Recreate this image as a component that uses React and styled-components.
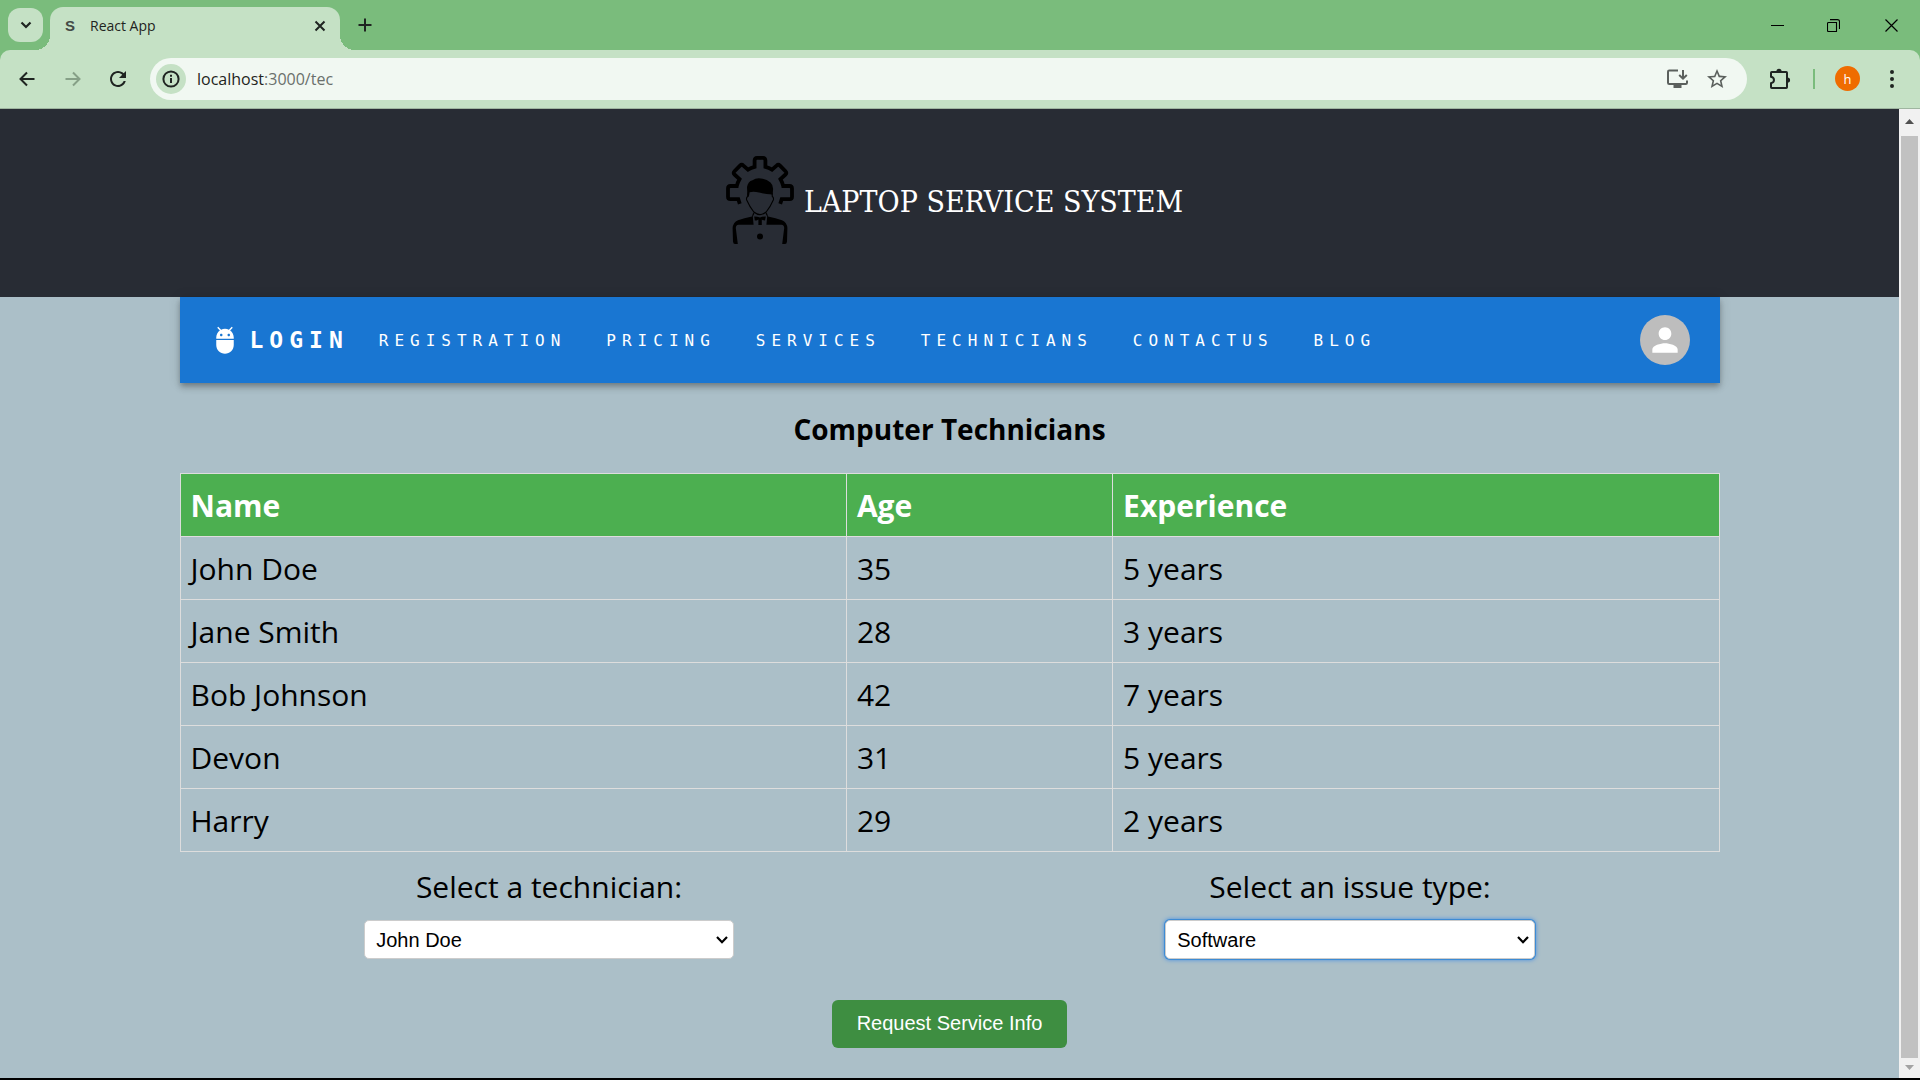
import React, { useState } from "react";
import styled, { createGlobalStyle } from "styled-components";

const ui = '"Open Sans", "Noto Sans", sans-serif';
const arial = '"Liberation Sans", Arial, sans-serif';
const mono = '"DejaVu Sans Mono", "Liberation Mono", monospace';

const GlobalStyle = createGlobalStyle`
  *, *::before, *::after { box-sizing: border-box; }
  body { margin: 0; font-family: ${ui}; color: #000; background: #abbfc8; }
  button, select, input { font: inherit; color: inherit; }
  svg { display: block; flex: none; }
`;

const Browser = styled.div`
  display: flex;
  flex-direction: column;
  min-height: 100vh;
  border-bottom: 2px solid #000;
`;

/* ---------- tab strip ---------- */

const TabStrip = styled.div`
  display: flex;
  align-items: center;
  height: 50px;
  padding-left: 8px;
  background: #7abc7c;
  color: #1f2421;
`;

const PlainButton = styled.button`
  display: flex;
  align-items: center;
  justify-content: center;
  padding: 0;
  border: 0;
  background: transparent;
  width: ${(p) => p.$w || 30}px;
  height: 34px;

  &:disabled { color: #86a087; }
`;

const TabSearch = styled(PlainButton)`
  width: 35px;
  border-radius: 12px;
  background: #c5e1c5;
`;

const Tab = styled.div`
  position: relative;
  display: flex;
  align-items: center;
  align-self: flex-end;
  width: 290px;
  height: 43px;
  margin-left: 7px;
  padding: 0 9px 6px 15px;
  border-radius: 13px 13px 0 0;
  background: #c5e1c5;
  font-size: 14px;

  &::before, &::after {
    content: "";
    position: absolute;
    bottom: 0;
    width: 15px;
    height: 15px;
  }
  &::before {
    right: 100%;
    background: radial-gradient(circle at 0 0, transparent 15px, #c5e1c5 15px);
  }
  &::after {
    left: 100%;
    background: radial-gradient(circle at 100% 0, transparent 15px, #c5e1c5 15px);
  }
`;

const Favicon = styled.span`
  width: 25px;
  font-family: ${arial};
  font-size: 15px;
  font-weight: 700;
  color: #444a46;
`;

const TabTitle = styled.span`
  flex: 1;
`;

const NewTab = styled(PlainButton)`
  margin-left: 10px;
`;

const WindowControls = styled.div`
  display: flex;
  margin-left: auto;
  color: #000;
`;

/* ---------- toolbar ---------- */

const ToolbarBack = styled.div`
  background: #7abc7c;
`;

const Toolbar = styled.div`
  display: flex;
  align-items: center;
  height: 59px;
  padding: 0 13px 1px 4px;
  border-radius: 10px 10px 0 0;
  border-bottom: 1px solid #9fb5a0;
  background: #c5e1c5;
  color: #1f2421;
`;

const AddressBar = styled.div`
  display: flex;
  align-items: center;
  flex: 1;
  height: 42px;
  margin-left: 9px;
  padding: 0 10px 0 6px;
  border-radius: 21px;
  background: #f1f8f2;
  color: #5b605d;
`;

const SiteInfo = styled(PlainButton)`
  height: 30px;
  border-radius: 50%;
  background: #c5e1c5;
  color: #1f2421;
`;

const Url = styled.div`
  flex: 1;
  margin-left: 11px;
  font-size: 16px;
  color: #6a706c;
`;

const Host = styled.span`
  color: #1f2421;
`;

const Divider = styled.span`
  width: 2px;
  height: 20px;
  margin-right: 20px;
  background: #7abc7c;
`;

const Profile = styled(PlainButton)`
  width: 25px;
  height: 25px;
  margin-right: 17px;
  border-radius: 50%;
  background: #ef6c00;
  color: #fff;
  font-size: 13px;
`;

/* ---------- web page ---------- */

const Viewport = styled.div`
  display: flex;
  flex: 1;
`;

const Page = styled.div`
  flex: 1;
`;

const Header = styled.header`
  display: flex;
  align-items: center;
  justify-content: center;
  padding: 47px 0 53px;
  background: #282c34;
  color: #fff;
`;

const Brand = styled.span`
  padding-top: 4px;
  font-family: "DejaVu Serif Condensed", "DejaVu Serif", serif;
  font-size: 30px;
  line-height: 40px;
`;

const Container = styled.div`
  max-width: 1540px;
  margin: 0 auto;
`;

const NavBar = styled.nav`
  display: flex;
  align-items: center;
  min-height: 86px;
  padding: 0 30px;
  background: #1976d2;
  color: #fff;
  font-family: ${mono};
  letter-spacing: 6px;
  box-shadow: 0 3px 5px -1px rgba(0, 0, 0, 0.2), 0 5px 6px rgba(0, 0, 0, 0.14),
    0 1px 12px rgba(0, 0, 0, 0.12);

  a { color: inherit; text-decoration: none; }
`;

const LoginLink = styled.a`
  display: flex;
  align-items: center;
  gap: 10px;
  margin-right: 30px;
  font-size: 23px;
  font-weight: 700;
`;

const NavLinks = styled.div`
  display: flex;
  flex: 1;
  gap: 40px;
  font-size: 16px;
`;

const Avatar = styled(PlainButton)`
  width: 50px;
  height: 50px;
  border-radius: 50%;
  background: #bdbdbd;
`;

const Title = styled.h2`
  margin: 26px 0 24px;
  font-size: 28px;
  line-height: 40px;
  text-align: center;
`;

const Table = styled.table`
  width: 100%;
  table-layout: fixed;
  border-collapse: collapse;
  font-size: 30px;
  line-height: 42px;
  text-align: left;

  th, td { padding: 11px 10px 9px; border: 1px solid #ddd; }
  th { background: #4caf50; color: #fff; }
`;

const Col = styled.col`
  width: ${(p) => p.$w};
`;

const Fields = styled.div`
  display: grid;
  grid-template-columns: 1fr 1fr;
  gap: 62px;
  padding: 14px 0 41px;
`;

const Field = styled.div`
  display: flex;
  flex-direction: column;
  align-items: center;
  gap: 12px;
  font-size: 30px;
  line-height: 42px;
`;

const SelectWrap = styled.div`
  position: relative;
  width: 50%;

  svg { position: absolute; right: 6px; top: 15px; pointer-events: none; }
`;

const Select = styled.select`
  display: block;
  appearance: none;
  width: 100%;
  height: 39px;
  padding: 0 32px 0 11px;
  border: 1px solid #ccc;
  border-radius: 5px;
  outline: none;
  background: #fff;
  font-family: ${arial};
  font-size: 20px;
  line-height: normal;
  box-shadow: ${(p) => (p.$active ? "0 0 0 1px #3d8bd4, 0 0 4px 1px #4a90e2" : "none")};
`;

const Submit = styled.button`
  display: block;
  height: 48px;
  margin: 0 auto 30px;
  padding: 0 25px 2px;
  border: 0;
  border-radius: 6px;
  background: #3e8e41;
  color: #fff;
  font-family: ${arial};
  font-size: 20px;
`;

const ScrollBar = styled.div`
  display: flex;
  flex-direction: column;
  align-items: center;
  width: 21px;
  background: #f1f1f1;
`;

const ScrollArrow = styled.span`
  display: flex;
  align-items: center;
  justify-content: center;
  height: ${(p) => p.$h}px;
  padding-bottom: 2px;
`;

const Thumb = styled.span`
  flex: 1;
  width: 17px;
  background: #c1c1c1;
`;

/* ---------- drawings ---------- */

const Line = ({ size, d, w = 2, box = 24 }) => (
  <svg width={size} height={size} viewBox={`0 0 ${box} ${box}`} fill="none" stroke="currentColor" strokeWidth={w} aria-hidden="true">
    <path d={d} />
  </svg>
);

const Solid = ({ size, d }) => (
  <svg width={size} height={size} viewBox="0 0 24 24" fill="currentColor" aria-hidden="true">
    <path d={d} />
  </svg>
);

const HALF_GEAR =
  "M23.8 47.8L22.3 43.2H14.5Q12 43.2 12 40.8V32.6Q12 30 14.5 30H20.8Q21.5 26.5 23.5 23.2L18.5 18.5Q16.8 17 18.5 15.2L24 9.6Q25.7 8 27.4 9.6L32 13.6Q35 11.7 38.6 10.8V4.4Q38.6 1.9 41 1.9H44.2";
const HALF_BODY =
  "M36.8 57.8L36 60.6Q28 62.5 22 64.2Q17 66.5 16.6 72L17 85.5Q17.2 88 19 88H21.8L19.8 72Q19.8 69 22.5 68.8H37.6L36.8 60.5L38.4 57.5L37.8 56.6Z";

const ServiceLogo = () => (
  <svg width="88" height="88" viewBox="0 0 88 88" aria-hidden="true">
    <g fill="none" stroke="#000" strokeWidth="3.8">
      <path d={HALF_GEAR} />
      <path d={HALF_GEAR} transform="matrix(-1 0 0 1 88 0)" />
    </g>
    <path d={HALF_BODY} />
    <path d={HALF_BODY} transform="matrix(-1 0 0 1 88 0)" />
    <path d="M31.4 40.5L31 31Q32 25.5 36.5 24.3Q40 21.6 45 22.4Q51 23 54.5 26.5Q57.2 29 57.1 33L56.6 40L56.2 38.4Q48 38 43 36.6Q38 35.2 33.6 36.2Q33.4 39 32.4 41Z" />
    <path d="M32 36.5L31.7 40.5Q30 41.5 30.7 44Q33.5 50.5 37.8 56Q41 58.6 44 58.6Q47 58.6 50.2 56Q54.5 50.5 57.3 44Q58 41.5 56.3 40.5L56 37" fill="none" stroke="#000" strokeWidth="1.1" />
    <path d="M38.2 60.5Q41 60.4 44 61.4Q47 60.4 49.8 60.5L49 64.6Q47.5 64.6 45.8 63.4V69H42.4V63.4Q40.5 64.6 38.8 64.6Z" />
    <circle cx="44" cy="80.4" r="3" />
  </svg>
);

const InstallIcon = () => (
  <svg width="22" height="22" viewBox="0 0 22 22" fill="none" stroke="currentColor" strokeWidth="2" aria-hidden="true">
    <path d="M12 2.5H3.2Q2 2.5 2 3.7V14.8Q2 16 3.2 16H19.8Q21 16 21 14.8V12.5" />
    <path d="M17 2V10M13.2 7L17 10.7L20.8 7" />
    <path d="M7.5 18.5H15.5" strokeWidth="3" />
  </svg>
);

const PuzzleIcon = () => (
  <svg width="22" height="22" viewBox="0 0 22 22" aria-hidden="true">
    <path d="M2.8 4H17.2Q18 4 18 4.8V19.2Q18 20 17.2 20H2.8Q2 20 2 19.2V15.2Q5 14.5 5 12T2 8.8V4.8Q2 4 2.8 4Z" fill="none" stroke="currentColor" strokeWidth="2" />
    <path d="M7.4 3.5A2.6 2.8 0 0 1 12.6 3.5ZM18.5 9.4A2.6 2.6 0 0 1 18.5 14.6Z" fill="currentColor" />
  </svg>
);

const InfoIcon = () => (
  <svg width="18" height="18" viewBox="0 0 18 18" fill="none" stroke="currentColor" strokeWidth="2" aria-hidden="true">
    <circle cx="9" cy="9" r="7.6" />
    <path d="M9 8V13M9 4.8V6.8" />
  </svg>
);

const Chevron = () => <Line size={12} box={12} w={2.2} d="M1 2L6 7.2L11 2" />;

const ADB =
  "M5 16c0 3.87 3.13 7 7 7s7-3.13 7-7v-4H5v4zM16.12 4.37l2.1-2.1-.82-.83-2.3 2.31C14.16 3.28 13.12 3 12 3s-2.16.28-3.09.75L6.6 1.44l-.82.83 2.1 2.1C6.14 5.64 5 7.68 5 10v1h14v-1c0-2.32-1.14-4.36-2.88-5.63zM9 9c-.55 0-1-.45-1-1s.45-1 1-1 1 .45 1 1-.45 1-1 1zm6 0c-.55 0-1-.45-1-1s.45-1 1-1 1 .45 1 1-.45 1-1 1z";
const PERSON =
  "M12 12c2.21 0 4-1.79 4-4s-1.79-4-4-4-4 1.79-4 4 1.79 4 4 4zm0 2c-2.67 0-8 1.34-8 4v2h16v-2c0-2.66-5.33-4-8-4z";
const REFRESH =
  "M17.65 6.35C16.2 4.9 14.21 4 12 4c-4.42 0-7.99 3.58-7.99 8s3.57 8 7.99 8c3.73 0 6.84-2.55 7.73-6h-2.08c-.82 2.33-3.04 4-5.65 4-3.31 0-6-2.69-6-6s2.69-6 6-6c1.66 0 3.14.69 4.22 1.78L13 11h7V4l-2.35 2.35z";
const STAR =
  "M22 9.24l-7.19-.62L12 2 9.19 8.63 2 9.24l5.46 4.73L5.82 21 12 17.27 18.18 21l-1.63-7.03L22 9.24zM12 15.4l-3.76 2.27 1-4.28-3.32-2.88 4.38-.38L12 6.1l1.71 4.04 4.38.38-3.32 2.88 1 4.28L12 15.4z";
const DOTS =
  "M12 7a2 2 0 100-4 2 2 0 000 4zm0 7a2 2 0 100-4 2 2 0 000 4zm0 7a2 2 0 100-4 2 2 0 000 4z";

/* ---------- data ---------- */

const LINKS = ["REGISTRATION", "PRICING", "SERVICES", "TECHNICIANS", "CONTACTUS", "BLOG"];

const TECHNICIANS = [
  { name: "John Doe", age: 35, experience: "5 years" },
  { name: "Jane Smith", age: 28, experience: "3 years" },
  { name: "Bob Johnson", age: 42, experience: "7 years" },
  { name: "Devon", age: 31, experience: "5 years" },
  { name: "Harry", age: 29, experience: "2 years" },
];

const BrowserChrome = () => (
  <>
    <TabStrip>
      <TabSearch aria-label="Search tabs"><Line size={12} box={12} w={2.2} d="M1.5 3.5L6 8L10.5 3.5" /></TabSearch>
      <Tab>
        <Favicon>S</Favicon>
        <TabTitle>React App</TabTitle>
        <PlainButton $w={22} aria-label="Close tab"><Line size={12} box={12} d="M1.5 1.5L10.5 10.5M10.5 1.5L1.5 10.5" /></PlainButton>
      </Tab>
      <NewTab aria-label="New tab"><Line size={14} box={14} d="M7 0.5V13.5M0.5 7H13.5" /></NewTab>
      <WindowControls>
        <PlainButton $w={56} aria-label="Minimize"><Line size={13} box={13} w={1} d="M0 6.5H13" /></PlainButton>
        <PlainButton $w={57} aria-label="Restore">
          <Line size={13} box={13} w={1.1} d="M1.5 3.5H9.5V12.5H1.5Q0.5 12.5 0.5 11.5V4.5Q0.5 3.5 1.5 3.5ZM3 0.6H10.5Q12.5 0.6 12.5 2.5V10" />
        </PlainButton>
        <PlainButton $w={58} aria-label="Close"><Line size={13} box={13} w={1.2} d="M0.5 0.5L12.5 12.5M12.5 0.5L0.5 12.5" /></PlainButton>
      </WindowControls>
    </TabStrip>
    <ToolbarBack>
      <Toolbar>
        <PlainButton $w={46} aria-label="Back"><Line size={16} box={16} d="M15.5 8H2M8 1.5L1.5 8L8 14.5" /></PlainButton>
        <PlainButton $w={45} aria-label="Forward" disabled>
          <Line size={16} box={16} d="M0.5 8H14M8 1.5L14.5 8L8 14.5" />
        </PlainButton>
        <PlainButton $w={46} aria-label="Reload"><Solid size={24} d={REFRESH} /></PlainButton>
        <AddressBar>
          <SiteInfo aria-label="Site information"><InfoIcon /></SiteInfo>
          <Url><Host>localhost</Host>:3000/tec</Url>
          <PlainButton $w={40} aria-label="Install app"><InstallIcon /></PlainButton>
          <PlainButton $w={40} aria-label="Bookmark"><Solid size={24} d={STAR} /></PlainButton>
        </AddressBar>
        <PlainButton $w={66} aria-label="Extensions"><PuzzleIcon /></PlainButton>
        <Divider />
        <Profile aria-label="Profile">h</Profile>
        <PlainButton aria-label="Menu"><Solid size={24} d={DOTS} /></PlainButton>
      </Toolbar>
    </ToolbarBack>
  </>
);

const SelectField = ({ id, label, options, initial, active }) => {
  const [value, setValue] = useState(initial);
  return (
    <Field>
      <label htmlFor={id}>{label}</label>
      <SelectWrap>
        <Select id={id} value={value} $active={active} onChange={(e) => setValue(e.target.value)}>
          {options.map((o) => <option key={o}>{o}</option>)}
        </Select>
        <Chevron />
      </SelectWrap>
    </Field>
  );
};

export default function App() {
  return (
    <Browser>
      <GlobalStyle />
      <BrowserChrome />
      <Viewport>
        <Page>
          <Header>
            <ServiceLogo />
            <Brand>LAPTOP SERVICE SYSTEM</Brand>
          </Header>
          <Container>
            <NavBar>
              <LoginLink href="#login"><Solid size={30} d={ADB} />LOGIN</LoginLink>
              <NavLinks>
                {LINKS.map((l) => <a key={l} href={`#${l.toLowerCase()}`}>{l}</a>)}
              </NavLinks>
              <Avatar aria-label="Account"><Solid size={38} d={PERSON} /></Avatar>
            </NavBar>
            <main>
              <Title>Computer Technicians</Title>
              <Table>
                <colgroup>
                  <Col $w="43.3%" />
                  <Col $w="17.3%" />
                  <Col />
                </colgroup>
                <thead>
                  <tr><th>Name</th><th>Age</th><th>Experience</th></tr>
                </thead>
                <tbody>
                  {TECHNICIANS.map((t) => (
                    <tr key={t.name}><td>{t.name}</td><td>{t.age}</td><td>{t.experience}</td></tr>
                  ))}
                </tbody>
              </Table>
              <Fields>
                <SelectField id="technician" label="Select a technician:" options={TECHNICIANS.map((t) => t.name)} initial="John Doe" />
                <SelectField id="issue" label="Select an issue type:" options={["Software", "Hardware"]} initial="Software" active />
              </Fields>
              <Submit type="button">Request Service Info</Submit>
            </main>
          </Container>
        </Page>
        <ScrollBar aria-hidden="true">
          <ScrollArrow $h={27}><svg width="9" height="5"><path d="M4.5 0L9 5H0Z" fill="#505050" /></svg></ScrollArrow>
          <Thumb />
          <ScrollArrow $h={20}><svg width="9" height="5"><path d="M0 0H9L4.5 5Z" fill="#a3a3a3" /></svg></ScrollArrow>
        </ScrollBar>
      </Viewport>
    </Browser>
  );
}
